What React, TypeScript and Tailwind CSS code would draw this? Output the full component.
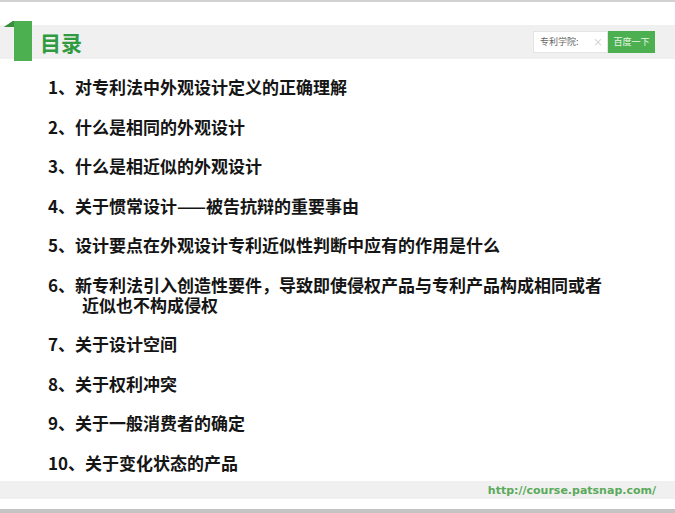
import React from "react";

const items: string[][] = [
  ["1、对专利法中外观设计定义的正确理解"],
  ["2、什么是相同的外观设计"],
  ["3、什么是相近似的外观设计"],
  ["4、关于惯常设计——被告抗辩的重要事由"],
  ["5、设计要点在外观设计专利近似性判断中应有的作用是什么"],
  ["6、新专利法引入创造性要件，导致即使侵权产品与专利产品构成相同或者", "近似也不构成侵权"],
  ["7、关于设计空间"],
  ["8、关于权利冲突"],
  ["9、关于一般消费者的确定"],
  ["10、关于变化状态的产品"],
];

export default function App() {
  return (
    <div
      className="w-[675px] h-[513px] bg-white flex flex-col overflow-hidden"
      style={{ fontFamily: '"Noto Sans CJK SC", "Noto Sans", sans-serif' }}
    >
      <div className="h-[2px] bg-[#d2d2d2]" />
      <div className="h-[23px]" />
      <div className="h-[34px] bg-[#f0f0f0] flex items-center">
        <svg width="34" height="40" viewBox="0 0 34 40" className="shrink-0 -mt-[2px]">
          <path d="M4 6 L13 0 L32 0 L32 40 L14 40 L14 6 Z" fill="#4cb050" />
          <path d="M4 6 L13 0 L14 0 L14 6 Z" fill="#3a8c3e" />
        </svg>
        <span className="ml-[6px] text-[21px] font-bold text-[#2f9a3f] leading-none">目录</span>
        <div className="ml-auto mr-[20px] flex items-center h-[22px]">
          <div className="w-[75px] h-[22px] bg-white border border-[#e4e4e4] flex items-center pl-[6px] pr-[4px]">
            <span className="text-[9px] text-[#666]">专利学院:</span>
            <span className="ml-auto text-[10px] text-[#c8c8c8] leading-none">×</span>
          </div>
          <div className="w-[47px] h-[22px] bg-[#4cb050] flex items-center justify-center">
            <span className="text-[9px] text-[#e8f5e8]">百度一下</span>
          </div>
        </div>
      </div>
      <div className="flex-1 flex flex-col gap-[19.5px] pl-[48px] pt-[18px]">
        {items.map((lines, i) => (
          <div
            key={i}
            className="text-[17px] font-bold text-[#151515] leading-[20px] whitespace-nowrap pl-[34px] -indent-[34px]"
          >
            {lines[0]}
            {lines[1] && (
              <>
                <br />
                {lines[1]}
              </>
            )}
          </div>
        ))}
      </div>
      <div className="h-[18px] bg-[#f0f0f0] flex items-center justify-end pr-[19px]">
        <span
          className="text-[11px] font-bold text-[#5aaa5a] leading-none"
          style={{ fontFamily: '"DejaVu Sans", sans-serif' }}
        >
          http://course.patsnap.com/
        </span>
      </div>
      <div className="h-[10px]" />
      <div className="h-[4px] bg-[#c4c4c4]" />
    </div>
  );
}
